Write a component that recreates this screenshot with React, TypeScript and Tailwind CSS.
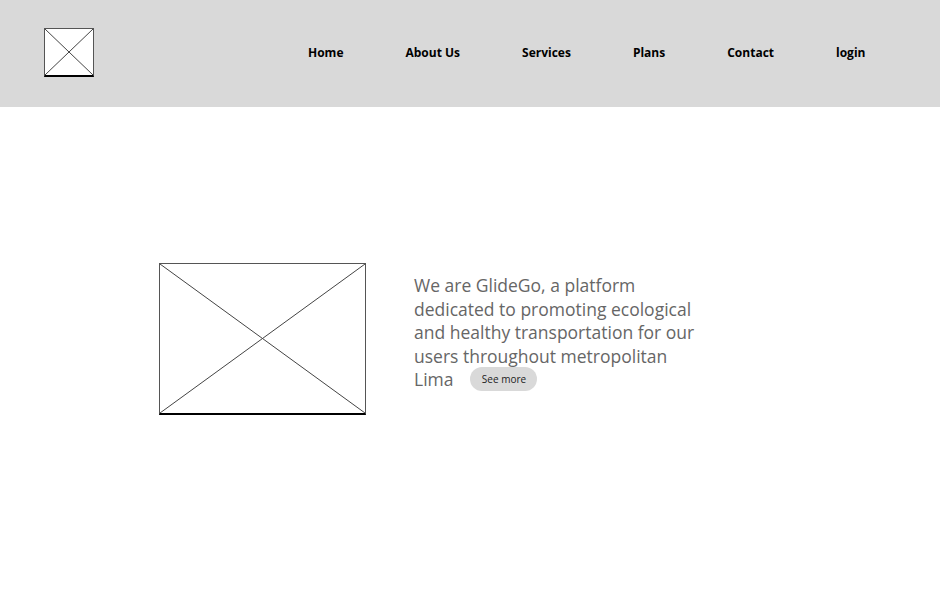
import React from "react";

function Placeholder({ className }: { className: string }) {
  return (
    <div className={`relative bg-white border border-[#555] border-b-2 border-b-black ${className}`}>
      <svg className="absolute inset-0 w-full h-full" preserveAspectRatio="none" viewBox="0 0 100 100">
        <line x1="0" y1="0" x2="100" y2="100" stroke="#444" strokeWidth="1" vectorEffect="non-scaling-stroke" />
        <line x1="100" y1="0" x2="0" y2="100" stroke="#444" strokeWidth="1" vectorEffect="non-scaling-stroke" />
      </svg>
    </div>
  );
}

const links = ["Home", "About Us", "Services", "Plans", "Contact", "login"];

export default function App() {
  return (
    <div className="w-[940px] h-[610px] bg-white font-['Open_Sans',sans-serif]">
      <header className="h-[107px] bg-[#d9d9d9] flex items-center pl-[44px]">
        <Placeholder className="w-[50px] h-[49px] -mt-[3px]" />
        <nav className="flex items-center gap-[62px] ml-[214px] -mt-[1px]">
          {links.map((l) => (
            <a key={l} className="text-[12px] font-bold text-black">
              {l}
            </a>
          ))}
        </nav>
      </header>

      <main className="flex items-start pl-[159px] pt-[156px]">
        <Placeholder className="w-[207px] h-[152px] shrink-0" />
        <div className="ml-[48px] mt-[11px] w-[290px] text-[17.5px] leading-[23.5px] text-[#666]">
          <p>
            We are GlideGo, a platform dedicated to promoting ecological and healthy transportation for our users
            throughout metropolitan
          </p>
          <div className="flex items-center">
            <span>Lima</span>
            <button className="ml-[17px] -mt-[2px] flex items-center justify-center h-[24px] w-[67px] rounded-full bg-[#d9d9d9] text-[10px] leading-none text-[#222]">
              See more
            </button>
          </div>
        </div>
      </main>
    </div>
  );
}
